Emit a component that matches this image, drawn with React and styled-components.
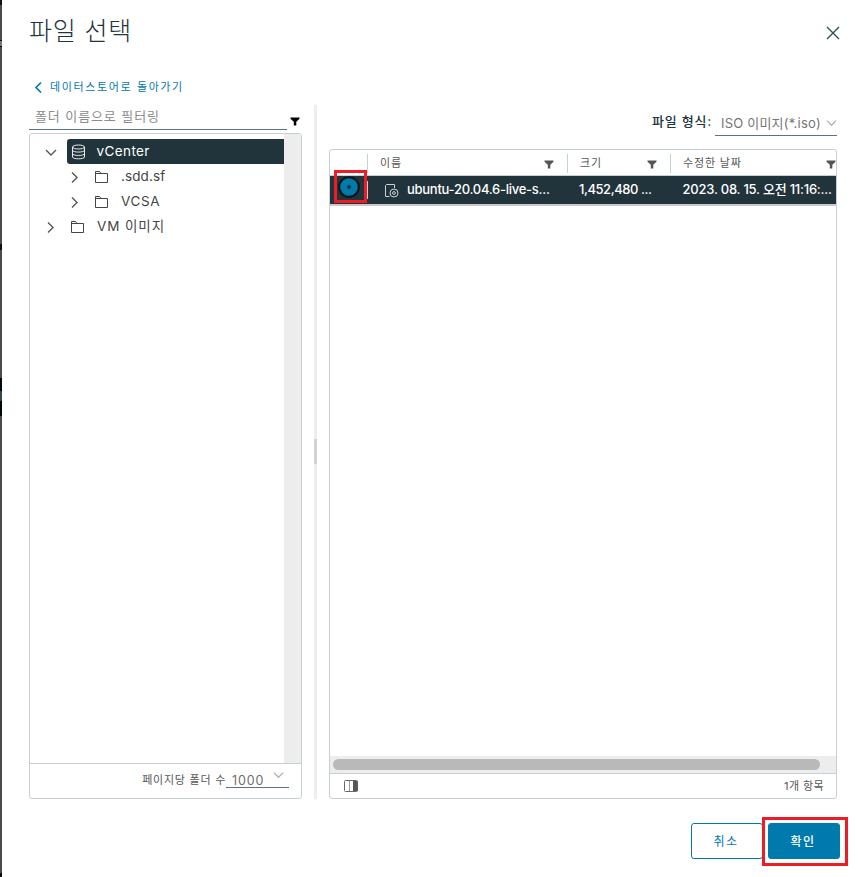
import React from "react";
import styled, { createGlobalStyle } from "styled-components";

const GlobalStyle = createGlobalStyle`
  * { box-sizing: border-box; }
  body { margin: 0; background: #fff; overflow: hidden; }
  svg { display: block; flex: none; }
  button { margin: 0; font: inherit; cursor: pointer; }
`;

const Page = styled.div`
  display: flex;
  width: 861px;
  height: 877px;
  font-family: Inter, "Noto Sans CJK KR", sans-serif;
  color: #21333b;
`;

const Backdrop = styled.div`
  flex: none;
  width: 2px;
  background: linear-gradient(
    #111 0 5px, #4a4a4a 5px 40px, #111 40px 41px, #777 41px 46px, #111 46px 47px,
    #4a4a4a 47px 244px, #111 244px 250px, #4a4a4a 250px 378px, #02070b 378px 391px,
    #39434a 391px 401px, #02070b 401px 416px, #4a4a4a 416px 873px, #0b0b0b 873px
  );
`;

const Dialog = styled.main`
  flex: 1;
  display: flex;
  flex-direction: column;
  padding: 0 24px 0 27px;
`;

const Text = styled.span`
  font-size: ${(p) => p.$size || 13}px;
  font-weight: ${(p) => p.$weight || 400};
  letter-spacing: ${(p) => p.$spacing || 0}px;
  line-height: 20px;
  color: ${(p) => p.$color || "inherit"};
  white-space: nowrap;
`;

const Header = styled.header`
  display: flex;
  justify-content: space-between;
  height: 77px;
`;

const Title = styled.h1`
  margin: 13px 0 0;
  font-size: 25px;
  line-height: 36px;
  font-weight: 300;
  letter-spacing: 0.8px;
`;

const CloseButton = styled.button`
  width: 14px;
  height: 14px;
  margin: 26px -3px 0 0;
  padding: 0;
  border: 0;
  background: none;
`;

const Columns = styled.div`
  display: flex;
  height: 722px;
`;

const FolderColumn = styled.section`
  display: flex;
  flex-direction: column;
  width: 273px;
`;

const BackLink = styled.a`
  display: flex;
  align-items: center;
  gap: 6px;
  height: 20px;
  padding-left: 3px;
  color: #0079ad;
  & > svg { margin-top: 1px; }
`;

const FilterRow = styled.div`
  display: flex;
  height: 33px;
  gap: 3px;
  margin-bottom: 3px;
  & > svg { margin-top: 20px; }
`;

const FilterField = styled.div`
  width: 258px;
  padding: 8px 0 0 6px;
  border-bottom: 1px solid #5b737f;
`;

const Panel = styled.div`
  flex: 1;
  display: flex;
  flex-direction: column;
  min-height: 0;
  border: 1px solid #c5d0d4;
  border-radius: 3px;
  overflow: hidden;
`;

const TreeArea = styled.div`
  flex: 1;
  display: flex;
  justify-content: space-between;
`;

const Tree = styled.div`
  width: 254px;
  padding-top: 5px;
`;

const ScrollGutter = styled.div`
  width: 17px;
  background: #ededed;
`;

const TreeRow = styled.div`
  display: flex;
  height: 25px;
  padding-left: ${(p) => 14 + p.$level * 24}px;
  & > svg { margin: 7px ${(p) => (p.$open ? 0 : 1)}px 0 ${(p) => (p.$open ? 1 : 0)}px; }
`;

const TreeNode = styled.div`
  flex: 1;
  display: flex;
  gap: ${(p) => (p.$selected ? 11 : 12)}px;
  margin-left: 10px;
  padding: 2px 0 0 ${(p) => (p.$selected ? 3.5 : 3)}px;
  border-radius: 3px 0 0 3px;
  color: ${(p) => (p.$selected ? "#fff" : "#454545")};
  background: ${(p) => (p.$selected ? "#21333b" : "transparent")};
  & > svg { margin-top: 3px; }
`;

const PanelFooter = styled.footer`
  display: flex;
  flex: none;
  border-top: 1px solid #c5d0d4;
`;

const TreeFooter = styled(PanelFooter)`
  height: 35px;
  justify-content: flex-end;
  padding: 6px 12px 0 0;
`;

const PageSize = styled.div`
  display: flex;
  justify-content: space-between;
  width: 63px;
  height: 18px;
  padding: 1px 5px 0 6px;
  border-bottom: 1px solid #5b737f;
  & > svg { margin-top: -2px; }
`;

const Splitter = styled.div`
  display: flex;
  align-items: center;
  width: 3px;
  height: 694px;
  margin: 28px 12px 0;
  background: #ededed;
`;

const SplitterHandle = styled.div`
  width: 3px;
  height: 25px;
  margin-top: -2px;
  background: #d3d3d3;
`;

const FileColumn = styled.section`
  display: flex;
  flex-direction: column;
  width: 508px;
`;

const FileTypeRow = styled.div`
  display: flex;
  justify-content: flex-end;
  gap: 3px;
  height: 72px;
  padding-top: 34px;
`;

const TypeSelect = styled.div`
  display: flex;
  justify-content: space-between;
  width: 122px;
  height: 25px;
  padding: 2px 0 0 6px;
  border-bottom: 1px solid #5b737f;
  & > svg { margin-top: 4px; }
`;

const GridHead = styled.div`
  display: grid;
  grid-template-columns: 37px 200px 103px 1fr;
  height: 26px;
  border-bottom: 1px solid #c5d0d4;
`;

const HeadCell = styled.div`
  display: flex;
  justify-content: space-between;
  height: 19px;
  margin-top: 4px;
  padding: 0 ${(p) => p.$right ?? 13}px 0 12px;
  border-left: 1px solid #c5d0d4;
  & > svg { margin-top: 6px; }
  & > span { margin-top: -1px; }
`;

const GridRow = styled.div`
  display: grid;
  grid-template-columns: 37px 200px 103px 1fr;
  height: 30px;
  color: #fff;
  background: #21333b;
  border-bottom: 2px solid #cbc8cd;
`;

const RadioCell = styled.div`
  position: relative;
  height: 18px;
  margin-top: 5px;
`;

const RadioHighlight = styled.div`
  position: absolute;
  z-index: 1;
  left: 4px;
  top: -11px;
  width: 33px;
  height: 33px;
  padding: 3px 0 0 1px;
  border: 3px solid #ee1c24;
`;

const RowCell = styled.div`
  display: flex;
  padding: 3px 0 0 ${(p) => p.$left ?? 12}px;
`;

const FileNameCell = styled(RowCell)`
  height: 18px;
  margin-top: 5px;
  padding: 0 0 0 16px;
  border-left: 1px solid #c5d0d4;
  & > svg { margin: 2px 8px 0 0; }
  & > span { margin-top: -2px; }
`;

const GridBody = styled.div`
  flex: 1;
`;

const ScrollTrack = styled.div`
  height: 17px;
  padding: 3px 16px 3px 3px;
  background: #ededed;
`;

const ScrollThumb = styled.div`
  height: 11px;
  border-radius: 6px;
  background: #b9b9b9;
`;

const GridFooter = styled(PanelFooter)`
  height: 25px;
  justify-content: space-between;
  padding: 2px 12px 0 14px;
  & > svg { margin-top: 4px; }
`;

const Actions = styled.div`
  display: flex;
  justify-content: flex-end;
  margin: 18px -11px 0 0;
`;

const Button = styled.button`
  width: 72px;
  height: 36px;
  padding: 0 2px 0 0;
  border: 1px solid #0079ad;
  border-radius: 3px;
  color: ${(p) => (p.$primary ? "#fff" : "#0079ad")};
  background: ${(p) => (p.$primary ? "#0079ad" : "#fff")};
`;

const CancelSlot = styled.div`
  width: 71px;
  padding-top: 6px;
`;

const ConfirmHighlight = styled.div`
  position: relative;
  width: 86px;
  height: 49px;
  padding: 3px;
  border: 3px solid #ee1c24;
  background: #fff;
`;

const Funnel = ({ color = "#555" }) => (
  <svg width="10" height="9" viewBox="0 0 10 9">
    <path d="M.5.5h9v1.2L6.3 4.8v3.7H3.8V4.8L.5 1.7z" fill={color} />
  </svg>
);

const CHEVRON_PATHS = {
  right: "M4 1.5 9 6.5 4 11.5",
  down: "M1 4 6 9 11 4",
  left: "M9 1.5 4 6.5 9 11.5",
};

const Chevron = ({ dir = "right", color = "#565656", width = 12, stroke = 1.4 }) => (
  <svg width={width} height={(width * 13) / 12} viewBox="0 0 12 13" fill="none" stroke={color} strokeWidth={stroke}>
    <path d={CHEVRON_PATHS[dir]} />
  </svg>
);

const FolderIcon = () => (
  <svg width="15" height="15" viewBox="0 0 15 15" fill="none" stroke="#454545">
    <path d="M1.5 2.5h4l1.5 2h6.5v9h-12zM1.5 4.5H7" />
  </svg>
);

const DatastoreIcon = () => (
  <svg width="15" height="16" viewBox="0 0 15 16" fill="none" stroke="#e6ebed">
    <ellipse cx="7.5" cy="3" rx="6" ry="2" />
    <path d="M1.5 3v10c0 2.4 12 2.4 12 0V3M1.5 6.2c0 2.5 12 2.5 12 0M1.5 9.6c0 2.5 12 2.5 12 0" />
  </svg>
);

const IsoIcon = () => (
  <svg width="15" height="15" viewBox="0 0 15 15" fill="none" stroke="#c9d2d6">
    <path d="M5.5 13.5h-4v-11l1-1h8V5" />
    <circle cx="10" cy="10" r="4" />
    <circle cx="10" cy="10" r="1.4" />
  </svg>
);

const TREE = [
  { name: "vCenter", level: 0, open: true, selected: true, spacing: 0.4 },
  { name: ".sdd.sf", level: 1, spacing: 0.1 },
  { name: "VCSA", level: 1, spacing: 0.6 },
  { name: "VM 이미지", level: 0, spacing: 0.9 },
];

export default function App() {
  return (
    <>
      <GlobalStyle />
      <Page>
        <Backdrop />
        <Dialog>
          <Header>
            <Title>파일 선택</Title>
            <CloseButton aria-label="닫기">
              <svg width="14" height="14" viewBox="0 0 14 14" stroke="#304b59" strokeWidth="1.4">
                <path d="M1 1 13 13M13 1 1 13" />
              </svg>
            </CloseButton>
          </Header>
          <Columns>
            <FolderColumn>
              <BackLink>
                <Chevron dir="left" color="#0079ad" stroke={1.7} />
                <Text $size={11} $spacing={1.62}>데이터스토어로 돌아가기</Text>
              </BackLink>
              <FilterRow>
                <FilterField>
                  <Text $size={13} $spacing={0.9} $color="#8c8c8c">폴더 이름으로 필터링</Text>
                </FilterField>
                <Funnel color="#000" />
              </FilterRow>
              <Panel>
                <TreeArea>
                  <Tree>
                    {TREE.map((n) => (
                      <TreeRow key={n.name} $level={n.level} $open={n.open}>
                        <Chevron dir={n.open ? "down" : "right"} />
                        <TreeNode $selected={n.selected}>
                          {n.selected ? <DatastoreIcon /> : <FolderIcon />}
                          <Text $size={13.5} $spacing={n.spacing}>{n.name}</Text>
                        </TreeNode>
                      </TreeRow>
                    ))}
                  </Tree>
                  <ScrollGutter />
                </TreeArea>
                <TreeFooter>
                  <Text $size={11} $spacing={0.75} $color="#565656">페이지당 폴더 수</Text>
                  <PageSize>
                    <Text $size={12.5} $spacing={0.9} $color="#6c6c6c">1000</Text>
                    <Chevron dir="down" color="#b0b0b0" width={11} />
                  </PageSize>
                </TreeFooter>
              </Panel>
            </FolderColumn>
            <Splitter><SplitterHandle /></Splitter>
            <FileColumn>
              <FileTypeRow>
                <Text $weight={500} $spacing={0.8}>파일 형식:</Text>
                <TypeSelect>
                  <Text $spacing={0.2} $color="#757575">ISO 이미지(*.iso)</Text>
                  <Chevron dir="down" color="#b0b0b0" width={11} />
                </TypeSelect>
              </FileTypeRow>
              <Panel>
                <GridHead>
                  <span />
                  <HeadCell><Text $size={11} $spacing={0.9} $color="#565656">이름</Text><Funnel /></HeadCell>
                  <HeadCell><Text $size={11} $spacing={0.9} $color="#565656">크기</Text><Funnel /></HeadCell>
                  <HeadCell $right={0}><Text $size={11} $spacing={0.85} $color="#565656">수정한 날짜</Text><Funnel /></HeadCell>
                </GridHead>
                <GridRow>
                  <RadioCell>
                    <RadioHighlight>
                      <svg width="23" height="23" viewBox="0 0 23 23">
                        <circle cx="11" cy="11" r="9.8" fill="#0079ad" stroke="#101416" strokeWidth="2" />
                        <circle cx="11" cy="11" r="2" fill="#21333b" />
                      </svg>
                    </RadioHighlight>
                  </RadioCell>
                  <FileNameCell>
                    <IsoIcon />
                    <Text $weight={500} $spacing={-0.27}>ubuntu-20.04.6-live-s...</Text>
                  </FileNameCell>
                  <RowCell><Text $weight={500} $spacing={-0.45}>1,452,480 ...</Text></RowCell>
                  <RowCell $left={12.5}><Text $weight={500} $spacing={-0.22}>2023. 08. 15. 오전 11:16:...</Text></RowCell>
                </GridRow>
                <GridBody />
                <ScrollTrack><ScrollThumb /></ScrollTrack>
                <GridFooter>
                  <svg width="15" height="13" viewBox="0 0 15 13" fill="none" stroke="#666">
                    <rect x=".5" y=".5" width="13" height="11" rx="1" />
                    <path d="M5.5 1v10" stroke="#999" />
                    <path d="M9 1h4.5v10H9z" fill="#565656" stroke="none" />
                  </svg>
                  <Text $size={11} $spacing={0.4} $color="#565656">1개 항목</Text>
                </GridFooter>
              </Panel>
            </FileColumn>
          </Columns>
          <Actions>
            <CancelSlot><Button><Text $size={12} $spacing={1.5}>취소</Text></Button></CancelSlot>
            <ConfirmHighlight><Button $primary><Text $size={12} $weight={500} $spacing={1.5}>확인</Text></Button></ConfirmHighlight>
          </Actions>
        </Dialog>
      </Page>
    </>
  );
}
